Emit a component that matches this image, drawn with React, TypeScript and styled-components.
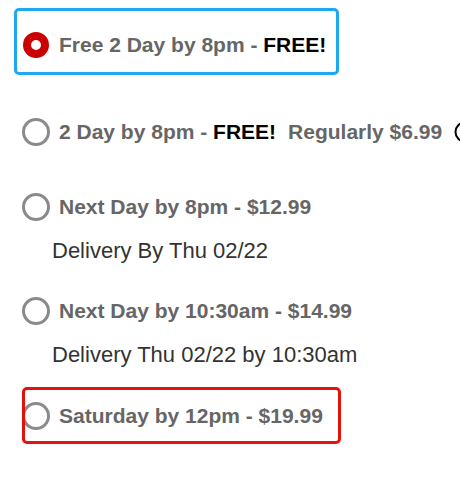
import { FC } from "react";
import styled, { createGlobalStyle } from "styled-components";

const GlobalStyle = createGlobalStyle`
  html, body {
    margin: 0;
    padding: 0;
    height: 100%;
    background: #ffffff;
    overflow: hidden;
  }
  body {
    font-family: "Liberation Sans", Arial, sans-serif;
  }
`;

interface Ring {
  color: string;
  top: number;
  right: number;
  bottom: number;
  left: number;
}

interface ShippingOption {
  id: string;
  label: string;
  price: string;
  free?: boolean;
  regular?: string;
  note?: string;
  selected?: boolean;
  ring?: Ring;
  after: number;
}

const options: ShippingOption[] = [
  {
    id: "free2day",
    label: "Free 2 Day by 8pm",
    price: "FREE!",
    free: true,
    selected: true,
    ring: { color: "#1ea8f2", top: 22, right: 13, bottom: 15, left: 8 },
    after: 57,
  },
  {
    id: "2day",
    label: "2 Day by 8pm",
    price: "FREE!",
    free: true,
    regular: "Regularly $6.99",
    after: 45,
  },
  {
    id: "nextday",
    label: "Next Day by 8pm",
    price: "$12.99",
    note: "Delivery By Thu 02/22",
    after: 30,
  },
  {
    id: "nextday1030",
    label: "Next Day by 10:30am",
    price: "$14.99",
    note: "Delivery Thu 02/22 by 10:30am",
    after: 31,
  },
  {
    id: "saturday",
    label: "Saturday by 12pm",
    price: "$19.99",
    ring: { color: "#e3120b", top: 14, right: 18, bottom: 13, left: 0 },
    after: 0,
  },
];

const List = styled.div`
  display: flex;
  flex-direction: column;
  padding: 30px 0 0 22px;
`;

const Group = styled.div<{ $after: number }>`
  display: flex;
  flex-direction: column;
  align-items: flex-start;
  margin-bottom: ${(p) => p.$after}px;
`;

const Option = styled.label<{ $ring?: Ring }>`
  position: relative;
  display: inline-flex;
  align-items: center;
  gap: 9px;
  height: 30px;
  white-space: nowrap;
  cursor: pointer;

  &::after {
    content: "";
    display: ${(p) => (p.$ring ? "block" : "none")};
    position: absolute;
    top: ${(p) => -(p.$ring?.top ?? 0)}px;
    right: ${(p) => -(p.$ring?.right ?? 0)}px;
    bottom: ${(p) => -(p.$ring?.bottom ?? 0)}px;
    left: ${(p) => -(p.$ring?.left ?? 0)}px;
    border: 3px solid ${(p) => p.$ring?.color ?? "transparent"};
    border-radius: 5px;
    pointer-events: none;
  }
`;

const Radio = styled.span<{ $checked?: boolean }>`
  box-sizing: border-box;
  flex: none;
  width: ${(p) => (p.$checked ? 26 : 28)}px;
  height: ${(p) => (p.$checked ? 26 : 28)}px;
  margin: ${(p) => (p.$checked ? 1 : 0)}px;
  border-radius: 50%;
  border: ${(p) => (p.$checked ? "8px solid #cc0000" : "3px solid #8a8a8a")};
  background: #ffffff;
`;

const Label = styled.span`
  font-size: 21px;
  font-weight: 700;
  color: #666666;
`;

const Free = styled.span`
  color: #000000;
`;

const Regular = styled.span`
  margin-left: 12px;
`;

const InfoIcon = styled.svg`
  flex: none;
  margin-left: 3px;
  width: 22px;
  height: 22px;
`;

const Note = styled.div`
  margin-top: 14px;
  padding-left: 30px;
  font-size: 22px;
  line-height: 30px;
  color: #333333;
`;

const App: FC = () => {
  return (
    <>
      <GlobalStyle />
      <List>
        {options.map((o) => (
          <Group key={o.id} $after={o.after}>
            <Option $ring={o.ring}>
              <Radio $checked={o.selected} />
              <Label>
                {o.label} -{" "}
                {o.free ? <Free>{o.price}</Free> : o.price}
                {o.regular && <Regular>{o.regular}</Regular>}
              </Label>
              {o.regular && (
                <InfoIcon viewBox="0 0 22 22" aria-hidden="true">
                  <circle cx="11" cy="11" r="9.5" fill="none" stroke="#000" strokeWidth="2" />
                  <rect x="10" y="9" width="2" height="7" fill="#000" />
                  <rect x="10" y="5.5" width="2" height="2" fill="#000" />
                </InfoIcon>
              )}
            </Option>
            {o.note && <Note>{o.note}</Note>}
          </Group>
        ))}
      </List>
    </>
  );
};

export default App;
